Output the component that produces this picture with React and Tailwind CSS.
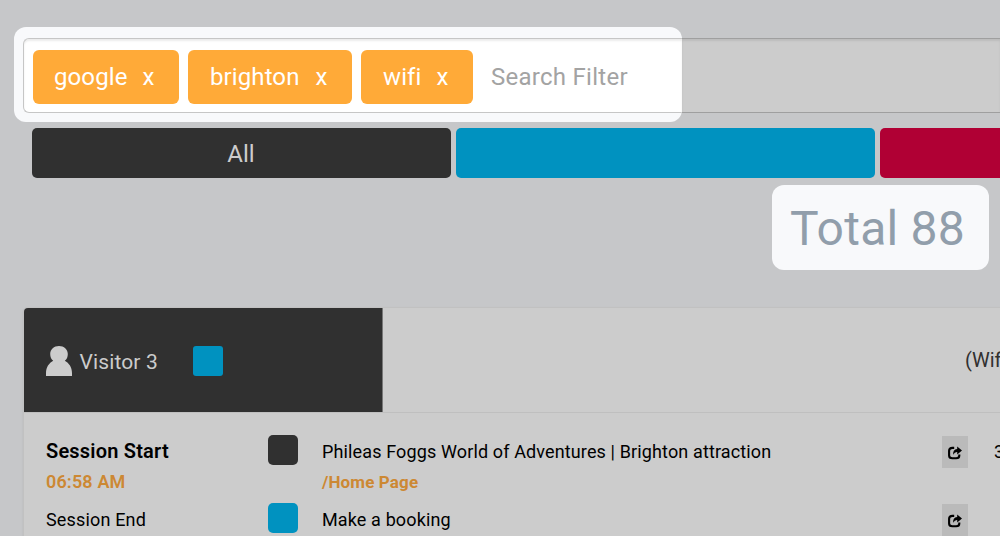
const tags = [
  { label: 'google', box: 'w-[146px] gap-[15px] pl-[21px]' },
  { label: 'brighton', box: 'w-[164px] gap-4 pl-[22px]' },
  { label: 'wifi', box: 'w-[112px] gap-[15px] pl-[22px]' },
];

function ShareButton() {
  return (
    <div className="flex h-8 w-[26px] items-center justify-center bg-[#bababa] pt-0.5">
      <svg width="14" height="14" viewBox="0 0 14 14" fill="none">
        <path d="M6.2 1.9H4.4Q1.1 1.9 1.1 4.8V9.4Q1.1 12.2 4.4 12.2H8.2Q11.3 12.2 11.3 9.4V8.6" stroke="#000" strokeWidth="2.1" />
        <path d="M9.2 0.6L14 4.6L9.2 8.4V6.1Q6.6 5.9 5.2 8.8Q4.6 3.4 9.2 2.9Z" fill="#000" />
      </svg>
    </div>
  );
}

function Row({ children, page, path, swatch, time, count, bold }) {
  return (
    <div className="flex h-[68px] w-[1060px] shrink-0">
      <div className="w-[222px] shrink-0 pt-px">
        <div className={bold ? 'text-[20px] leading-[30px] font-semibold tracking-[0.2px]' : 'text-[18px] leading-[31px] tracking-[0.17px]'}>{children}</div>
        {time && <div className="text-[18px] leading-[32px] font-semibold tracking-[0.15px] text-[#cc8833]">{time}</div>}
      </div>
      <div className={`mr-6 size-[30px] shrink-0 rounded-[5px] ${swatch}`} />
      <div className="w-[620px] shrink-0 pt-px text-[18px] leading-[31px] tracking-[0.13px]">
        <div>{page}</div>
        {path && <div className="text-[17px] leading-[30px] font-bold text-[#cc8833]">{path}</div>}
      </div>
      <div className="pt-px"><ShareButton /></div>
      <div className="ml-[26px] pt-px text-[18px] leading-[31px]">{count}</div>
    </div>
  );
}

export default function App() {
  return (
    <main className="flex h-[536px] w-[1000px] flex-col overflow-hidden bg-[#c6c7c9] pt-[27px] font-['Roboto',sans-serif] text-black">
      <section className="flex h-[95px] shrink-0 pl-3.5">
        <div className="w-[668px] shrink-0 overflow-hidden rounded-xl bg-[#f8f9fb] pt-[11px] pl-[9px]">
          <div className="flex h-[75px] items-center gap-[9px] rounded-l-[6px] border-y border-l border-[#c6c6c6] bg-white pt-0.5 pl-[9px] shadow-[inset_0_2px_2px_rgba(0,0,0,0.08)]">
            {tags.map((tag) => (
              <button key={tag.label} className={`flex h-[54px] shrink-0 items-center rounded-[6px] bg-[#ffaa38] text-[24px] tracking-[0.1px] text-white ${tag.box}`}>
                <span>{tag.label}</span>
                <span>x</span>
              </button>
            ))}
            <span className="ml-[9px] text-[24px] tracking-[0.27px] text-[#a3a3a3]">Search Filter</span>
          </div>
        </div>
        <div className="mt-[11px] h-[75px] flex-1 border-y border-[#9f9f9f] bg-[#cccccc] shadow-[inset_0_2px_2px_rgba(0,0,0,0.08)]" />
      </section>

      <nav className="mt-1.5 flex h-[50px] shrink-0 gap-[5px] pl-8">
        <div className="flex w-[419px] shrink-0 items-center justify-center rounded-[5px] bg-[#303030] pt-0.5 pr-px text-[24px] tracking-[0.1px] text-[#cccccc]">All</div>
        <div className="w-[419px] shrink-0 rounded-[5px] bg-[#0092c0]" />
        <div className="w-[419px] shrink-0 rounded-[5px] bg-[#b00034]" />
      </nav>

      <div className="mt-[7px] mr-[11px] flex h-[85px] w-[217px] shrink-0 items-center self-end rounded-xl bg-[#f8f9fb] pt-0.5 pl-[18px] text-[48px] tracking-[0.25px] whitespace-nowrap text-[#919eab]">Total 88</div>

      <section className="mt-[37px] ml-[23px] flex h-[240px] w-[1100px] shrink-0 flex-col rounded-tl-[5px] border border-[#c1c1c1] bg-[#cccccc] shadow-[0_1px_2px_rgba(0,0,0,0.1)]">
        <header className="flex h-[105px] shrink-0 border-b border-[#bfbfbf]">
          <div className="flex w-[359px] shrink-0 items-center rounded-tl-[4px] border-r border-[#777777] bg-[#303030] pt-0.5 pl-[22px]">
            <svg width="26" height="30" viewBox="0 0 26 30" className="text-[#cccccc]">
              <path fill="currentColor" d="M13 0C18 0 21.8 3.4 21.8 8C21.8 11 20.8 13.1 18.8 14.8C23 17 26 21.5 26 27V30H0V27C0 21.5 3 17 7.2 14.8C5.2 13.1 4.2 11 4.2 8C4.2 3.4 8 0 13 0Z" />
            </svg>
            <span className="ml-[7.5px] w-[113.5px] pt-[3px] text-[21px] tracking-[0.13px] text-[#cccccc]">Visitor 3</span>
            <span className="size-[30px] rounded-[3px] bg-[#0092c0]" />
          </div>
          <div className="flex-1 pt-px pl-[582px] text-[20px] leading-[102px] whitespace-nowrap text-[#303030]">(Wifi)</div>
        </header>
        <div className="flex flex-col pt-[22px] pl-[22px]">
          <Row bold time="06:58 AM" swatch="bg-[#303030]" page="Phileas Foggs World of Adventures | Brighton attraction" path="/Home Page" count="3">Session Start</Row>
          <Row swatch="bg-[#0092c0]" page="Make a booking">Session End</Row>
        </div>
      </section>
    </main>
  );
}
